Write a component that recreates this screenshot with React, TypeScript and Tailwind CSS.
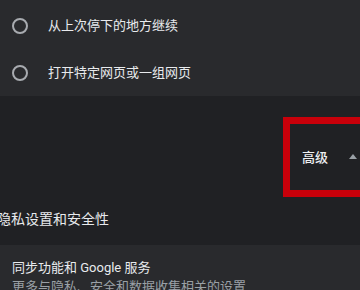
const FONT = "font-['Roboto','Noto_Sans_CJK_SC',sans-serif]";

const OPTIONS = ["从上次停下的地方继续", "打开特定网页或一组网页"];

function Radio({ label }: { label: string }) {
  return (
    <div className="flex h-[47px] items-center">
      <span className="ml-[12px] box-border h-[16px] w-[16px] shrink-0 rounded-full border-2 border-[#a8abb0]" />
      <span className="ml-[20px] text-[13px] leading-none text-[#e8eaed]">{label}</span>
    </div>
  );
}

export default function App() {
  return (
    <div className={`${FONT} h-[290px] w-[360px] overflow-hidden bg-[#202124]`}>
      {/* startup options card */}
      <div className="h-[96px] bg-[#292a2d] pt-[2px]">
        {OPTIONS.map((o) => (
          <Radio key={o} label={o} />
        ))}
      </div>

      {/* advanced toggle, highlighted with a red frame */}
      <div className="flex pt-[21px]">
        <div className="ml-[283px] box-border flex h-[80px] w-[100px] shrink-0 items-center border-[7px] border-[#c8000a] pl-[12px]">
          <span className="text-[13px] font-medium leading-none text-[#eef0f2]">高级</span>
          <svg width="8" height="5" viewBox="0 0 8 5" className="ml-[21px] mb-[1px]">
            <path d="M0 5 L4 0 L8 5 Z" fill="#9aa0a6" />
          </svg>
        </div>
      </div>

      {/* section heading */}
      <div className="flex h-[48px] items-center pb-[4px]">
        <span className="-ml-[3px] text-[14px] leading-none text-[#e8eaed]">隐私设置和安全性</span>
      </div>

      {/* sync card */}
      <div className="h-[60px] bg-[#292a2d] pl-[12px] pt-[14px]">
        <p className="text-[13px] leading-[18px] text-[#e8eaed]">同步功能和 Google 服务</p>
        <p className="text-[13px] leading-[19px] text-[#9aa0a6]">更多与隐私、安全和数据收集相关的设置</p>
      </div>
    </div>
  );
}
